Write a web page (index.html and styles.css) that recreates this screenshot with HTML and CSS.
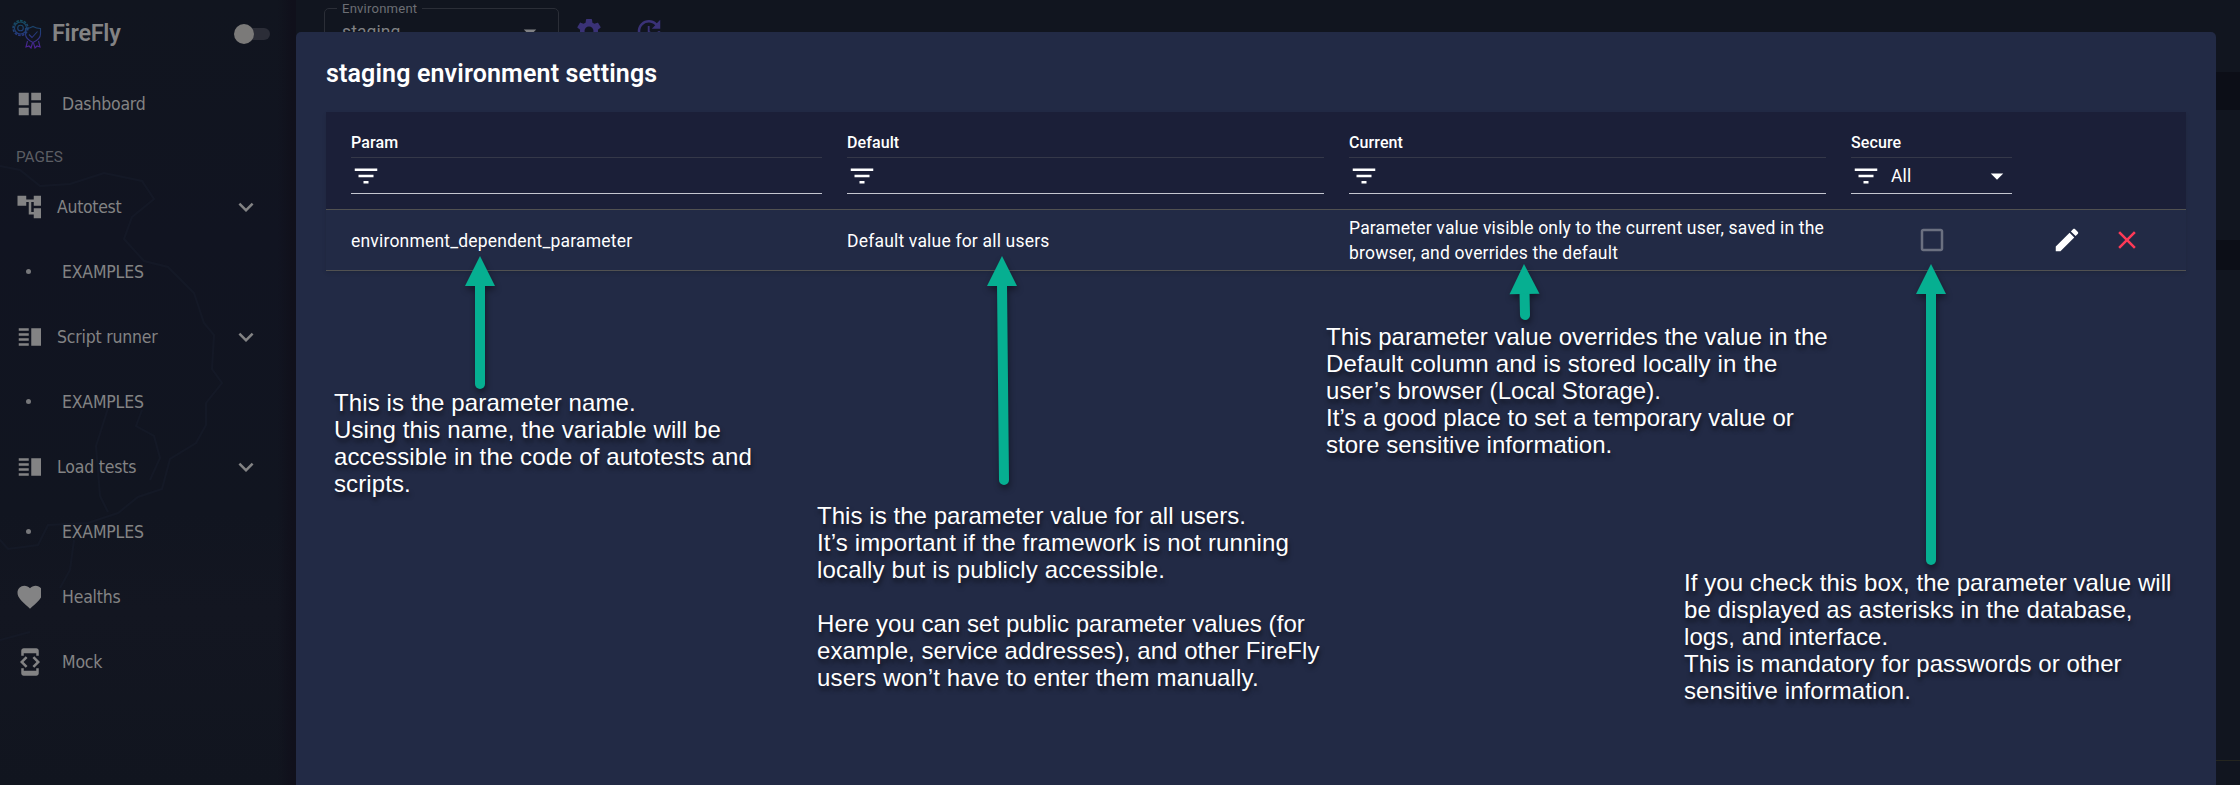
FILE: index.html
```html
<!DOCTYPE html>
<html lang="en">
<head>
<meta charset="utf-8">
<title>FireFly</title>
<link rel="stylesheet" href="styles.css">
</head>
<body>
<svg class="defs" width="0" height="0">
  <defs>
    <linearGradient id="brand" gradientUnits="userSpaceOnUse" x1="0" y1="0" x2="0" y2="30">
      <stop offset="0" stop-color="#12515e"/>
      <stop offset=".5" stop-color="#243a7c"/>
      <stop offset="1" stop-color="#54209a"/>
    </linearGradient>
    <symbol id="filter" viewBox="0 0 24 24"><path d="M10 18h4v-2h-4v2zM3 6v2h18V6H3zm3 7h12v-2H6v2z"/></symbol>
    <symbol id="drop" viewBox="0 0 24 24"><path d="M7 10l5 5 5-5z"/></symbol>
    <symbol id="more" viewBox="0 0 24 24"><path d="M16.59 8.59L12 13.17 7.41 8.59 6 10l6 6 6-6z"/></symbol>
    <symbol id="dash" viewBox="0 0 24 24"><path d="M3 13h8V3H3v10zm0 8h8v-6H3v6zm10 0h8V11h-8v10zm0-18v6h8V3h-8z"/></symbol>
    <symbol id="tree" viewBox="0 0 24 24"><path d="M22 11V3h-7v3H9V3H2v8h7V8h2v10h4v3h7v-8h-7v3h-2V8h2v3h7z"/></symbol>
    <symbol id="split" viewBox="0 0 24 24"><path d="M3 15h8v-2H3v2zm0 4h8v-2H3v2zm0-8h8V9H3v2zm0-6v2h8V5H3zm10 0h8v14h-8V5z"/></symbol>
    <symbol id="heart" viewBox="0 0 24 24"><path d="M12 21.35l-1.45-1.32C5.4 15.36 2 12.28 2 8.5 2 5.42 4.42 3 7.5 3c1.74 0 3.41.81 4.5 2.09C13.09 3.81 14.76 3 16.5 3 19.58 3 22 5.42 22 8.5c0 3.78-3.4 6.86-8.55 11.54L12 21.35z"/></symbol>
    <symbol id="dev" viewBox="0 0 24 24"><path d="M7 5h10v2h2V3c0-1.1-.9-1.99-2-1.99L7 1c-1.1 0-2 .9-2 2v4h2V5zm8.41 11.59L20 12l-4.59-4.59L14 8.83 17.17 12 14 15.17l1.41 1.42zM10 15.17L6.83 12 10 8.83 8.59 7.41 4 12l4.59 4.59L10 15.17zM17 19H7v-2H5v4c0 1.1.9 2 2 2h10c1.1 0 2-.9 2-2v-4h-2v2z"/></symbol>
    <symbol id="gear" viewBox="0 0 24 24"><path d="M19.14 12.94c.04-.3.06-.61.06-.94 0-.32-.02-.64-.07-.94l2.03-1.58c.18-.14.23-.41.12-.61l-1.92-3.32c-.12-.22-.37-.29-.59-.22l-2.39.96c-.5-.38-1.03-.7-1.62-.94l-.36-2.54c-.04-.24-.24-.41-.48-.41h-3.84c-.24 0-.43.17-.47.41l-.36 2.54c-.59.24-1.13.57-1.62.94l-2.39-.96c-.22-.08-.47 0-.59.22L2.74 8.87c-.12.21-.08.47.12.61l2.03 1.58c-.05.3-.09.63-.09.94s.02.64.07.94l-2.03 1.58c-.18.14-.23.41-.12.61l1.92 3.32c.12.22.37.29.59.22l2.39-.96c.5.38 1.03.7 1.62.94l.36 2.54c.05.24.24.41.48.41h3.84c.24 0 .44-.17.47-.41l.36-2.54c.59-.24 1.13-.56 1.62-.94l2.39.96c.22.08.47 0 .59-.22l1.92-3.32c.12-.22.07-.47-.12-.61l-2.01-1.58zM12 15.6c-1.98 0-3.6-1.62-3.6-3.6s1.62-3.6 3.6-3.6 3.6 1.62 3.6 3.6-1.62 3.6-3.6 3.6z"/></symbol>
    <symbol id="update" viewBox="0 0 24 24"><path d="M21 10.12h-6.78l2.74-2.82c-2.73-2.7-7.15-2.8-9.88-.1-2.73 2.71-2.73 7.08 0 9.79s7.15 2.71 9.88 0C18.32 15.65 19 14.08 19 12.1h2c0 1.98-.88 4.55-2.64 6.29-3.51 3.48-9.21 3.48-12.72 0-3.5-3.47-3.53-9.11-.02-12.58s9.14-3.47 12.65 0L21 3v7.12zM12.5 8v4.25l3.5 2.08-.72 1.21L11 13V8h1.5z"/></symbol>
    <symbol id="box" viewBox="0 0 24 24"><path d="M19 5v14H5V5h14m0-2H5c-1.1 0-2 .9-2 2v14c0 1.1.9 2 2 2h14c1.1 0 2-.9 2-2V5c0-1.1-.9-2-2-2z"/></symbol>
    <symbol id="edit" viewBox="0 0 24 24"><path d="M3 17.25V21h3.75L17.81 9.94l-3.75-3.75L3 17.25zM20.71 7.04c.39-.39.39-1.02 0-1.41l-2.34-2.34c-.39-.39-1.02-.39-1.41 0l-1.83 1.83 3.75 3.75 1.83-1.83z"/></symbol>
    <symbol id="clear" viewBox="0 0 24 24"><path d="M19 6.41L17.59 5 12 10.59 6.41 5 5 6.41 10.59 12 5 17.59 6.41 19 12 13.41 17.59 19 19 17.59 13.41 12z"/></symbol>
  </defs>
</svg>

<div class="app">
  <aside class="sidebar">
    <header class="brand">
      <svg class="brand-logo" viewBox="0 0 32 30" fill="none" stroke="url(#brand)" stroke-width="1.1">
        <circle cx="9.5" cy="9" r="7.4" stroke-dasharray="2.6 1.2" stroke-width="1.6"/>
        <circle cx="9.5" cy="9" r="6"/>
        <circle cx="9.5" cy="9" r="2.8"/>
        <path d="M22 7.5c2.500 1.500 5 2 7.500 2v5.500c0 4-3 6.500-7.500 8.500-4.500-2-7.500-4.500-7.500-8.500v-5.500c2.500 0 5-.5 7.500-2z"/>
        <path d="M18 15.500l3 3 5.500-6"/>
        <path d="M16.500 22l-1.500 6 3-1 2 2 1.500-5M27.500 22l1.500 6-3-1-2 2-1.500-5"/>
      </svg>
      <span class="brand-name">FireFly</span>
      <span class="switch"><span class="switch-knob"></span></span>
    </header>
    <nav class="nav">
      <a class="item top"><span class="ico"><svg><use href="#dash"/></svg></span><span class="txt">Dashboard</span></a>
      <div class="label">PAGES</div>
      <a class="item group"><span class="ico"><svg><use href="#tree"/></svg></span><span class="txt tight">Autotest</span><svg class="chev"><use href="#more"/></svg></a>
      <a class="item"><span class="ico"><i class="dot"></i></span><span class="txt caps">EXAMPLES</span></a>
      <a class="item group"><span class="ico"><svg><use href="#split"/></svg></span><span class="txt">Script runner</span><svg class="chev"><use href="#more"/></svg></a>
      <a class="item"><span class="ico"><i class="dot"></i></span><span class="txt caps">EXAMPLES</span></a>
      <a class="item group"><span class="ico"><svg><use href="#split"/></svg></span><span class="txt">Load tests</span><svg class="chev"><use href="#more"/></svg></a>
      <a class="item"><span class="ico"><i class="dot"></i></span><span class="txt caps">EXAMPLES</span></a>
      <a class="item"><span class="ico"><svg><use href="#heart"/></svg></span><span class="txt">Healths</span></a>
      <a class="item"><span class="ico"><svg><use href="#dev"/></svg></span><span class="txt">Mock</span></a>
    </nav>
    <svg class="texture" viewBox="0 0 296 785" fill="none" stroke="#161b29" stroke-width="2">
      <path d="M0 166l20 4 20 16 30-2 34-11 38 8 12 18-22 18-8 22 20 22 24 6 26 26 10 30 10 12-2 34 10 14-16 20v22l-10 18-26 16-8 30-24 8-20 16-30 10-40 2-10 20-30 4-18-20-10-14"/>
      <path d="M110 402l-14 44 4 50 8 16M142 410l-6 16 18 10 6 22-10 22M74 540l-4 30-10 18M0 640l30-8"/>
    </svg>
  </aside>

  <main class="page">
    <div class="toolbar">
      <fieldset class="select">
        <legend>Environment</legend>
        <div class="select-value"><span>staging</span><svg><use href="#drop"/></svg></div>
      </fieldset>
      <svg class="tool"><use href="#gear"/></svg>
      <svg class="tool"><use href="#update"/></svg>
    </div>
    <div class="band band-a"></div>
    <div class="band band-b"></div>
    <div class="rule"></div>
  </main>
</div>

<section class="dialog">
  <h2 class="dialog-title">staging environment settings</h2>
  <div class="table">
    <div class="row head">
      <div class="cell"><div class="col-name">Param</div><div class="filter"><svg><use href="#filter"/></svg></div></div>
      <div class="cell"><div class="col-name">Default</div><div class="filter"><svg><use href="#filter"/></svg></div></div>
      <div class="cell"><div class="col-name">Current</div><div class="filter"><svg><use href="#filter"/></svg></div></div>
      <div class="cell"><div class="col-name">Secure</div><div class="filter"><svg><use href="#filter"/></svg><span class="filter-value">All</span><svg class="end"><use href="#drop"/></svg></div></div>
    </div>
    <div class="row body">
      <div class="cell single">environment_dependent_parameter</div>
      <div class="cell single">Default value for all users</div>
      <div class="cell wide">Parameter value visible only to the current user, saved in the<br>browser, and overrides the default</div>
      <div class="cell check"><svg><use href="#box"/></svg></div>
      <div class="cell actions"><svg class="edit"><use href="#edit"/></svg><svg class="remove"><use href="#clear"/></svg></div>
    </div>
  </div>
</section>

<svg class="arrows" viewBox="0 0 2240 785">
  <g fill="#06af91" stroke="#06af91" stroke-width="10" stroke-linecap="round">
    <path d="M480 284V384"/><path stroke="none" d="M480 256l15 30h-30z"/>
    <path d="M1002 284L1004 480"/><path stroke="none" d="M1002 256l15 30h-30z"/>
    <path d="M1524.500 292L1525 315"/><path stroke="none" d="M1524 264l15.500 29.700-30 .6z"/>
    <path d="M1931 292V560"/><path stroke="none" d="M1931 264l15 30h-30z"/>
  </g>
</svg>
<p class="note note-param">This is the parameter name.<br>Using this name, the variable will be<br>accessible in the code of autotests and<br>scripts.</p>
<p class="note note-default">This is the parameter value for all users.<br><span class="loose">It’s important if the framework is not running</span><br><span class="loose">locally but is publicly accessible.</span><br><br>Here you can set public parameter values (for<br>example, service addresses), and other FireFly<br><span class="loose">users won’t have to enter them manually.</span></p>
<p class="note note-current">This parameter value overrides the value in the<br><span class="loose">Default column and is stored locally in the</span><br>user’s browser (Local Storage).<br>It’s a good place to set a temporary value or<br>store sensitive information.</p>
<p class="note note-secure">If you check this box, the parameter value will<br>be displayed as asterisks in the database,<br>logs, and interface.<br>This is mandatory for passwords or other<br>sensitive information.</p>
</body>
</html>
```
FILE: styles.css
```css
* { box-sizing: border-box; }
body { margin: 0; width: 2240px; height: 785px; overflow: hidden; position: relative; background: #11151f; font-family: Roboto, "Liberation Sans", sans-serif; font-size: 17.5px; color: #fff; }
svg { display: block; width: 30px; height: 30px; fill: currentColor; flex: none; }
.defs { position: absolute; width: 0; height: 0; }

.app { display: flex; height: 785px; }
.sidebar { width: 296px; position: relative; color: #838384; background: linear-gradient(90deg, transparent 278px, #10101b 292px), linear-gradient(#11151f, #111421 30%, #111520 65%, #131621 78%, #11151f); }
.texture { position: absolute; inset: 0; width: 296px; height: 785px; z-index: 0; fill: none; opacity: .7; }
.brand, .nav { position: relative; z-index: 1; }
.brand { display: flex; align-items: center; height: 68px; padding-left: 11px; }
.brand-logo { width: 32px; height: 30px; fill: none; }
.brand-name { margin: -2px 0 0 9px; width: 185px; font-size: 23.4px; font-weight: 600; line-height: 28px; letter-spacing: -.25px; }
.switch { width: 33px; height: 12px; border-radius: 6px; background: #2b2d37; display: flex; align-items: center; }
.switch-knob { width: 20px; height: 20px; border-radius: 50%; background: #7b7a79; margin-left: -3px; flex: none; }

.nav { padding-top: 3px; }
.item { display: flex; align-items: center; height: 65px; padding-left: 15px; font-family: "DejaVu Sans Condensed", "Noto Sans", sans-serif; }
.ico { width: 26px; height: 30px; overflow: hidden; flex: none; }
.dot { display: block; width: 5px; height: 5px; border-radius: 50%; background: #77787b; margin: 12px 0 0 11px; }
.txt { margin-left: 21px; letter-spacing: -.2px; line-height: 25px; padding-top: 1px; }
.group .txt { margin-left: 16px; width: 174px; }
.tight { letter-spacing: -.3px; }
.caps { letter-spacing: -.2px; }
.label { height: 38px; padding: 8px 0 0 16px; font-size: 15.3px; line-height: 26px; color: #5c5e64; }

.page { flex: 1; position: relative; }
.toolbar { display: flex; align-items: flex-start; padding: 1px 0 0 28px; height: 72px; }
.select { width: 235px; height: 56px; margin: 0; padding: 0 12px; border: 1px solid #2b2e37; border-radius: 5px; color: #808184; }
.select legend { font-size: 13.1px; line-height: 15px; padding: 0 5px; color: #6c6e74; letter-spacing: .2px; }
.select-value { display: flex; justify-content: space-between; align-items: center; height: 30px; padding: 0 1px 0 5px; margin-top: 1px; letter-spacing: .1px; }
.tool { color: #3a3277; margin: 15px 0 0 15px; }
.tool + .tool { margin-left: 30px; }
.band { background: #0c0e17; height: 38px; }
.band-b { height: 30px; margin-top: 130px; }
.rule { height: 1px; background: #25261f; margin-top: 490px; }

.dialog { position: absolute; left: 296px; top: 32px; width: 1920px; height: 765px; padding: 0 30px; border-radius: 5px; background: #222a45; }
.dialog-title { margin: 0; height: 80px; padding-top: 26px; font-size: 25px; line-height: 32px; font-weight: 600; letter-spacing: .14px; }
.table { box-shadow: 0 2px 4px rgba(0,0,0,.12); }
.row { display: grid; grid-template-columns: 471px 477px 477px 161px 149px; column-gap: 25px; padding-left: 25px; border-bottom: 1px solid #515151; }
.head { height: 98px; padding-top: 16px; background: #1b1f38; }
.col-name { height: 30px; border-bottom: 1px solid #353849; font-size: 16px; font-weight: 500; line-height: 29px; letter-spacing: .1px; }
.filter { display: flex; align-items: center; height: 36px; border-bottom: 1px solid #c4c6d0; padding-top: 1px; }
.filter-value { margin-left: 10px; flex: 1; letter-spacing: .2px; }
.body { height: 61px; align-items: center; line-height: 25px; letter-spacing: .19px; background: #222a45; }
.body .single { padding-top: 2px; }
.body .wide { padding-top: 1px; }
.cell { white-space: nowrap; }
.check { display: flex; justify-content: center; color: #6b7080; }
.actions { display: flex; gap: 30px; padding-left: 15px; }
.remove { color: #ff3a57; }

.arrows { position: absolute; left: 0; top: 0; width: 2240px; height: 785px; filter: drop-shadow(1px 4px 3px rgba(0,0,0,.4)); }
.note { position: absolute; margin: 0; font-family: "Liberation Sans", Arial, sans-serif; font-size: 24px; line-height: 27px; white-space: nowrap; letter-spacing: .05px; text-shadow: 1px 4px 4px rgba(0,0,0,.5); }
.note-param { left: 334px; top: 389px; letter-spacing: .11px; }
.note-default { left: 817px; top: 502px; }
.note-current { left: 1326px; top: 323px; letter-spacing: .03px; }
.loose { letter-spacing: .15px; }
.note-current .loose { letter-spacing: .2px; }
.note-secure { left: 1684px; top: 569px; letter-spacing: .07px; }
```
